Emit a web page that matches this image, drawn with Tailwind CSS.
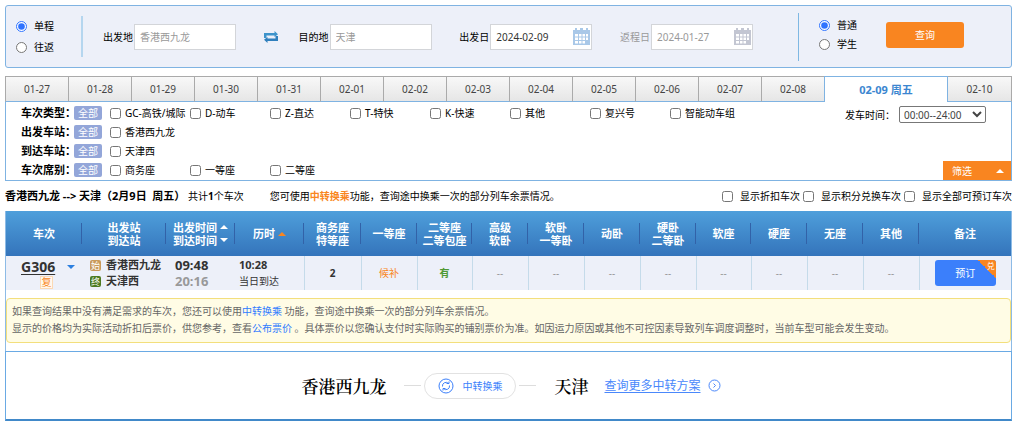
<!DOCTYPE html>
<html lang="zh-CN">
<head>
<meta charset="utf-8">
<meta name="viewport" content="width=device-width, initial-scale=1">
<title>车票查询</title>
<script src="https://cdn.jsdelivr.net/npm/@tailwindcss/browser@4"></script>
</head>
<body class="bg-white pt-[5px] pl-[5px] pr-3 pb-2 font-['Noto_Sans','Noto_Sans_CJK_SC',sans-serif] text-[10px] leading-4 text-black">

<form class="flex h-[63px] items-center rounded-[3px] border border-[#7fb3e2] bg-[#edf0f9]">
  <fieldset class="flex w-[75px] flex-col gap-[5px] pl-[10px]">
    <label class="flex items-center gap-[7px]"><input type="radio" name="trip" checked class="size-[11px] accent-[#2f73ff]">单程</label>
    <label class="flex items-center gap-[7px]"><input type="radio" name="trip" class="size-[11px] accent-[#2f73ff]">往返</label>
  </fieldset>
  <div class="flex h-[41px] flex-1 items-center justify-between border-l-2 border-[#b5d6ef] pr-[45px] pl-5">
    <label class="flex items-center gap-px">出发地<input type="text" value="香港西九龙" class="h-[26px] w-[102px] border border-[#d3d5d9] bg-white px-[5px] text-[#999]"></label>
    <button type="button" aria-label="交换" class="-mr-[7px] text-[#3d93cb]">
      <svg class="h-3 w-[14px]" viewBox="0 0 14 12" fill="currentColor"><path d="M0 7V2h10.500V0L14 3.200 10.500 6V4.500H2.500V7z"/><path d="M14 5v5H3.500v2L0 8.800 3.500 6v1.500h8V5z" fill="#2f7fbd"/></svg>
    </button>
    <label class="flex items-center gap-px">目的地<input type="text" value="天津" class="h-[26px] w-[102px] border border-[#d3d5d9] bg-white px-[5px] text-[#999]"></label>
    <div class="flex items-center gap-px"><label for="go">出发日</label>
      <div class="flex h-[26px] w-[102px] items-center border border-[#d3d5d9] bg-white pr-px pl-[5px]">
        <input id="go" type="text" value="2024-02-09" class="min-w-0 flex-1 text-[#333]">
        <button type="button" aria-label="选择出发日" class="text-[#a9c8e8]"><svg class="size-[17px]" viewBox="0 0 17 17"><path fill="currentColor" d="M0 2h2V0h2v2h3V0h3v2h3V0h2v2h2v15H0z"/><path fill="#fff" d="M2 6h3v2.500H2zM6 6h2.500v2.500H6zM9.500 6H12v2.500H9.500zM13 6h2v2.500h-2zM2 9.500h3V12H2zM6 9.500h2.500V12H6zM9.500 9.500H12V12H9.500zM13 9.500h2V12h-2zM2 13h3v2.500H2zM6 13h2.500v2.500H6zM9.500 13H12v2.500H9.500z"/></svg></button>
      </div>
    </div>
    <div class="flex items-center gap-px text-[#999]"><label for="back">返程日</label>
      <div class="flex h-[26px] w-[102px] items-center border border-[#d3d5d9] bg-white pr-px pl-[5px]">
        <input id="back" type="text" value="2024-01-27" class="min-w-0 flex-1">
        <button type="button" aria-label="选择返程日" class="text-[#c3c6d2]"><svg class="size-[17px]" viewBox="0 0 17 17"><path fill="currentColor" d="M0 2h2V0h2v2h3V0h3v2h3V0h2v2h2v15H0z"/><path fill="#fff" d="M2 6h3v2.500H2zM6 6h2.500v2.500H6zM9.500 6H12v2.500H9.500zM13 6h2v2.500h-2zM2 9.500h3V12H2zM6 9.500h2.500V12H6zM9.500 9.500H12V12H9.500zM13 9.500h2V12h-2zM2 13h3v2.500H2zM6 13h2.500v2.500H6zM9.500 13H12v2.500H9.500z"/></svg></button>
      </div>
    </div>
  </div>
  <div class="flex h-12 items-center border-l border-[#7fb8e3] pr-[47px] pl-5">
    <fieldset class="flex w-[67px] flex-col gap-[3px] pb-1">
      <label class="flex items-center gap-[7px]"><input type="radio" name="kind" checked class="size-[11px] accent-[#2f73ff]">普通</label>
      <label class="flex items-center gap-[7px]"><input type="radio" name="kind" class="size-[11px] accent-[#2f73ff]">学生</label>
    </fieldset>
    <button type="submit" class="mb-1 h-[26px] w-[78px] rounded-[3px] bg-[#f98520] text-white">查询</button>
  </div>
</form>

<nav class="mt-2 grid h-[26px] grid-cols-[repeat(13,63fr)_124fr_64fr] text-[#444]">
  <button class="border border-r-0 border-[#aaa] border-b-[#7fb3e2] bg-linear-to-b from-[#f8f8f8] to-[#e6e6e6]">01-27</button>
  <button class="border border-r-0 border-[#aaa] border-b-[#7fb3e2] bg-linear-to-b from-[#f8f8f8] to-[#e6e6e6]">01-28</button>
  <button class="border border-r-0 border-[#aaa] border-b-[#7fb3e2] bg-linear-to-b from-[#f8f8f8] to-[#e6e6e6]">01-29</button>
  <button class="border border-r-0 border-[#aaa] border-b-[#7fb3e2] bg-linear-to-b from-[#f8f8f8] to-[#e6e6e6]">01-30</button>
  <button class="border border-r-0 border-[#aaa] border-b-[#7fb3e2] bg-linear-to-b from-[#f8f8f8] to-[#e6e6e6]">01-31</button>
  <button class="border border-r-0 border-[#aaa] border-b-[#7fb3e2] bg-linear-to-b from-[#f8f8f8] to-[#e6e6e6]">02-01</button>
  <button class="border border-r-0 border-[#aaa] border-b-[#7fb3e2] bg-linear-to-b from-[#f8f8f8] to-[#e6e6e6]">02-02</button>
  <button class="border border-r-0 border-[#aaa] border-b-[#7fb3e2] bg-linear-to-b from-[#f8f8f8] to-[#e6e6e6]">02-03</button>
  <button class="border border-r-0 border-[#aaa] border-b-[#7fb3e2] bg-linear-to-b from-[#f8f8f8] to-[#e6e6e6]">02-04</button>
  <button class="border border-r-0 border-[#aaa] border-b-[#7fb3e2] bg-linear-to-b from-[#f8f8f8] to-[#e6e6e6]">02-05</button>
  <button class="border border-r-0 border-[#aaa] border-b-[#7fb3e2] bg-linear-to-b from-[#f8f8f8] to-[#e6e6e6]">02-06</button>
  <button class="border border-r-0 border-[#aaa] border-b-[#7fb3e2] bg-linear-to-b from-[#f8f8f8] to-[#e6e6e6]">02-07</button>
  <button class="border border-r-0 border-[#aaa] border-b-[#7fb3e2] bg-linear-to-b from-[#f8f8f8] to-[#e6e6e6]">02-08</button>
  <button class="border border-b-0 border-[#7fb3e2] bg-white text-[11px] font-bold text-[#3b86d0]">02-09 周五</button>
  <button class="border border-l-0 border-[#aaa] border-b-[#7fb3e2] bg-linear-to-b from-[#f8f8f8] to-[#e6e6e6]">02-10</button>
</nav>

<section class="flex h-[79px] justify-between border border-t-0 border-[#7fb3e2] pl-[15px]">
  <div class="flex flex-col gap-[3px] pt-[3px]">
    <div class="flex items-center"><b class="w-[53px] text-[11px] whitespace-nowrap">车次类型：</b><button class="mr-2 h-[14px] w-7 rounded-[2px] bg-[#93a6d9] leading-[14px] text-white">全部</button>
      <label class="flex w-20 items-center gap-1 whitespace-nowrap"><input type="checkbox" class="size-[11px]">GC-高铁/城际</label>
      <label class="flex w-20 items-center gap-1 whitespace-nowrap"><input type="checkbox" class="size-[11px]">D-动车</label>
      <label class="flex w-20 items-center gap-1 whitespace-nowrap"><input type="checkbox" class="size-[11px]">Z-直达</label>
      <label class="flex w-20 items-center gap-1 whitespace-nowrap"><input type="checkbox" class="size-[11px]">T-特快</label>
      <label class="flex w-20 items-center gap-1 whitespace-nowrap"><input type="checkbox" class="size-[11px]">K-快速</label>
      <label class="flex w-20 items-center gap-1 whitespace-nowrap"><input type="checkbox" class="size-[11px]">其他</label>
      <label class="flex w-20 items-center gap-1 whitespace-nowrap"><input type="checkbox" class="size-[11px]">复兴号</label>
      <label class="flex w-20 items-center gap-1 whitespace-nowrap"><input type="checkbox" class="size-[11px]">智能动车组</label>
    </div>
    <div class="flex items-center"><b class="w-[53px] text-[11px] whitespace-nowrap">出发车站：</b><button class="mr-2 h-[14px] w-7 rounded-[2px] bg-[#93a6d9] leading-[14px] text-white">全部</button>
      <label class="flex w-20 items-center gap-1 whitespace-nowrap"><input type="checkbox" class="size-[11px]">香港西九龙</label>
    </div>
    <div class="flex items-center"><b class="w-[53px] text-[11px] whitespace-nowrap">到达车站：</b><button class="mr-2 h-[14px] w-7 rounded-[2px] bg-[#93a6d9] leading-[14px] text-white">全部</button>
      <label class="flex w-20 items-center gap-1 whitespace-nowrap"><input type="checkbox" class="size-[11px]">天津西</label>
    </div>
    <div class="flex items-center"><b class="w-[53px] text-[11px] whitespace-nowrap">车次席别：</b><button class="mr-2 h-[14px] w-7 rounded-[2px] bg-[#93a6d9] leading-[14px] text-white">全部</button>
      <label class="flex w-20 items-center gap-1 whitespace-nowrap"><input type="checkbox" class="size-[11px]">商务座</label>
      <label class="flex w-20 items-center gap-1 whitespace-nowrap"><input type="checkbox" class="size-[11px]">一等座</label>
      <label class="flex w-20 items-center gap-1 whitespace-nowrap"><input type="checkbox" class="size-[11px]">二等座</label>
    </div>
  </div>
  <div class="flex flex-col items-end justify-between pt-1">
    <label class="flex items-center gap-1 pr-[25px]">发车时间：<select class="h-[17px] w-[87px] rounded-[2px] border border-[#777] bg-white text-[#444]"><option>00:00--24:00</option></select></label>
    <button class="flex h-[19px] w-[68px] items-center justify-between bg-[#f98520] pr-[7px] pl-[9px] text-white">筛选<svg class="h-1 w-2" viewBox="0 0 8 4" fill="currentColor"><path d="M0 4l4-4 4 4z"/></svg></button>
  </div>
</section>

<section class="flex h-[30px] items-center justify-between">
  <div class="flex items-center"><p><b class="text-[11px]">香港西九龙 --&gt; 天津（2月9日&nbsp; 周五）</b> 共计<b>1</b>个车次</p>
    <p class="ml-[26px]">您可使用<b class="text-[#f98520]">中转换乘</b>功能，查询途中换乘一次的部分列车余票情况。</p></div>
  <div class="flex gap-[3px]">
    <label class="flex items-center gap-[7px]"><input type="checkbox" class="size-[11px]">显示折扣车次</label>
    <label class="flex items-center gap-[7px]"><input type="checkbox" class="size-[11px]">显示积分兑换车次</label>
    <label class="flex items-center gap-[7px]"><input type="checkbox" class="size-[11px]">显示全部可预订车次</label>
  </div>
</section>

<main class="border-x border-[#8dbbe6]">
  <table class="w-full table-fixed border-collapse text-center">
    <colgroup><col class="w-[76px]"><col class="w-[84px]"><col class="w-[69px]"><col class="w-[69px]"><col class="w-[57px]"><col class="w-[56px]"><col class="w-[55px]"><col class="w-[56px]"><col class="w-[56px]"><col class="w-[56px]"><col class="w-[56px]"><col class="w-[55px]"><col class="w-[56px]"><col class="w-[56px]"><col class="w-[56px]"><col class="w-[92px]"></colgroup>
    <thead class="bg-linear-to-b from-[#4f9fdb] to-[#3474bb] text-[11px] leading-[13px] whitespace-nowrap text-white [&_th]:bg-[linear-gradient(#3262a8,#3262a8)] [&_th]:bg-[length:1px_21px] [&_th]:bg-right [&_th]:bg-no-repeat">
      <tr class="h-[45px]">
        <th>车次</th><th>出发站<br>到达站</th>
        <th><button class="mx-auto flex items-center gap-[3px]">出发时间<svg class="h-1 w-2" viewBox="0 0 8 4" fill="currentColor"><path d="M0 4l4-4 4 4z"/></svg></button><button class="mx-auto flex items-center gap-[3px]">到达时间<svg class="h-1 w-2" viewBox="0 0 8 4" fill="currentColor"><path d="M0 0l4 4 4-4z"/></svg></button></th>
        <th><button class="mx-auto flex items-center gap-[3px]">历时<svg class="h-1 w-2 text-[#f98520]" viewBox="0 0 8 4" fill="currentColor"><path d="M0 4l4-4 4 4z"/></svg></button></th>
        <th>商务座<br>特等座</th><th>一等座</th><th>二等座<br>二等包座</th><th>高级<br>软卧</th><th>软卧<br>一等卧</th><th>动卧</th><th>硬卧<br>二等卧</th><th>软座</th><th>硬座</th><th>无座</th><th>其他</th><th class="bg-none!">备注</th>
      </tr>
    </thead>
    <tbody>
      <tr class="h-[34px] bg-[#edf0f9] text-[#999] [&>td]:p-0">
        <td>
          <div class="flex items-center pl-[15px]"><a href="#" class="text-[14px] leading-[18px] font-bold text-[#333] underline underline-offset-2">G306</a><svg class="ml-3 h-1 w-2" viewBox="0 0 8 4" fill="#2c7fe0"><path d="M0 0l4 4 4-4z"/></svg></div>
          <span class="ml-[34px] block size-[13px] border border-[#fbd9b5] bg-[#fff8ee] leading-[11px] text-[#f98520]">复</span>
        </td>
        <td class="text-left text-[11px] font-bold whitespace-nowrap text-[#333]">
          <div class="flex items-center gap-[5px] pl-2"><span class="size-[11px] rounded-[2px] bg-[#c99a5b] text-center text-[9px] leading-[11px] font-normal text-white">始</span>香港西九龙</div>
          <div class="flex items-center gap-[5px] pl-2"><span class="size-[11px] rounded-[2px] bg-[#4c7a22] text-center text-[9px] leading-[11px] font-normal text-white">终</span>天津西</div>
        </td>
        <td class="text-[13px] font-bold"><div class="pl-[9px] text-left text-[#333]">09:48</div><div class="pl-[9px] text-left">20:16</div></td>
        <td class="border-r border-[#c5dbea] text-[#333]"><div class="pl-1 text-left text-[11px] font-bold">10:28</div><div class="pl-1 text-left">当日到达</div></td>
        <td class="border-r border-[#c5dbea] font-bold text-[#333]">2</td>
        <td class="border-r border-[#c5dbea] text-[#f98520]">候补</td>
        <td class="border-r border-[#c5dbea] font-bold text-[#4f9a33]">有</td>
        <td class="border-r border-[#c5dbea]">--</td><td class="border-r border-[#c5dbea]">--</td><td class="border-r border-[#c5dbea]">--</td><td class="border-r border-[#c5dbea]">--</td><td class="border-r border-[#c5dbea]">--</td><td class="border-r border-[#c5dbea]">--</td><td class="border-r border-[#c5dbea]">--</td><td class="border-r border-[#c5dbea]">--</td>
        <td><button class="relative h-[26px] w-[61px] overflow-hidden rounded-[3px] bg-[#3b7ffb] align-middle text-white">预订<span class="absolute top-0 right-0 h-[18px] w-[18px] bg-[linear-gradient(to_top_right,transparent_50%,#f98520_50%)] pr-px text-right text-[8px] leading-[11px]">兑</span></button></td>
      </tr>
    </tbody>
  </table>

  <div class="pt-2 pb-2">
    <div class="h-[45px] rounded-[4px] border border-[#f3df7c] bg-[#fffce5] px-[5px] pt-1 leading-[17px] text-[#666]">
      <p>如果查询结果中没有满足需求的车次，您还可以使用<a href="#" class="text-[#2f7bff]">中转换乘</a> 功能，查询途中换乘一次的部分列车余票情况。</p>
      <p>显示的价格均为实际活动折扣后票价，供您参考，查看<a href="#" class="text-[#2f7bff]">公布票价</a> 。具体票价以您确认支付时实际购买的铺别票价为准。如因运力原因或其他不可控因素导致列车调度调整时，当前车型可能会发生变动。</p>
    </div>
  </div>
</main>

<section class="flex h-[70px] items-center justify-center border border-b-2 border-[#6aaae4] border-b-[#4189c9] pl-[5px]">
  <strong class="font-['Noto_Serif_CJK_SC','Noto_Sans_CJK_SC',serif] text-[17px] leading-6 font-semibold">香港西九龙</strong>
  <span class="ml-[18px] h-px w-[17px] bg-[#ddd]"></span>
  <a href="#" class="mx-[3px] flex h-[26px] w-[92px] items-center justify-center gap-2 rounded-full border border-[#e2e2e2] text-[#3b7ffb]">
    <svg class="size-4" viewBox="0 0 16 16" fill="none" stroke="currentColor"><circle cx="8" cy="8" r="7"/><path d="M4.500 8.500a3.500 3.500 0 0 1 6-3M8.500 5.500h2.500V3.500M11.500 7.500a3.500 3.500 0 0 1-6 3M7.500 10.500H5v2"/></svg>中转换乘</a>
  <span class="h-px w-[17px] bg-[#ddd]"></span>
  <strong class="ml-[18px] font-['Noto_Serif_CJK_SC','Noto_Sans_CJK_SC',serif] text-[17px] leading-6 font-semibold">天津</strong>
  <a href="#" class="ml-4 flex items-center gap-[7px] text-[12px] text-[#4a88fb]"><span class="underline underline-offset-2">查询更多中转方案</span><svg class="size-[13px]" viewBox="0 0 13 13" fill="none" stroke="currentColor"><circle cx="6.500" cy="6.500" r="5.500"/><path d="M5.500 4.500l2 2-2 2"/></svg></a>
</section>
</body>
</html>
